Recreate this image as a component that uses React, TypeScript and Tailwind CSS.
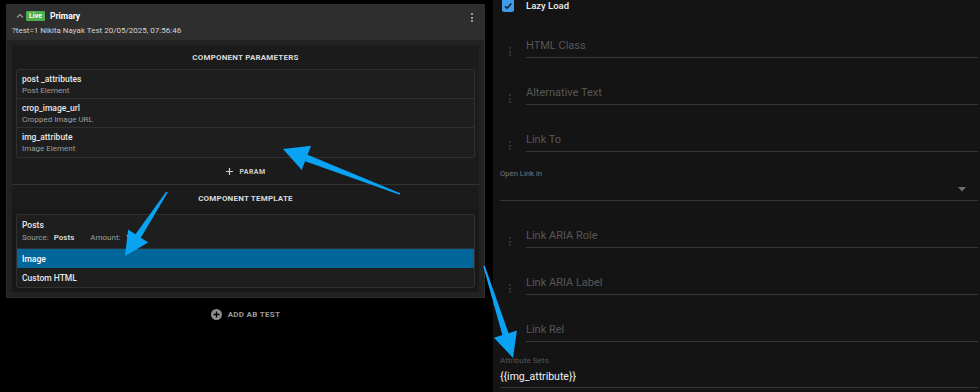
import React from "react";

type Pt = [number, number];

function arrowPoints(T: Pt, P: Pt, L: number, H: number, s1: number, s0: number): string {
  const dx = P[0] - T[0];
  const dy = P[1] - T[1];
  const len = Math.hypot(dx, dy);
  const d: Pt = [dx / len, dy / len];
  const n: Pt = [-d[1], d[0]];
  const B: Pt = [P[0] - d[0] * L, P[1] - d[1] * L];
  const pts: Pt[] = [
    [T[0] + n[0] * s0, T[1] + n[1] * s0],
    [B[0] + n[0] * s1, B[1] + n[1] * s1],
    [B[0] + n[0] * H, B[1] + n[1] * H],
    P,
    [B[0] - n[0] * H, B[1] - n[1] * H],
    [B[0] - n[0] * s1, B[1] - n[1] * s1],
    [T[0] - n[0] * s0, T[1] - n[1] * s0],
  ];
  return pts.map((p) => `${p[0].toFixed(1)},${p[1].toFixed(1)}`).join(" ");
}

function Dots({ className }: { className: string }) {
  return (
    <div className={`flex flex-col gap-[1.5px] ${className}`}>
      <span className="block w-[2px] h-[2px] rounded-full bg-current" />
      <span className="block w-[2px] h-[2px] rounded-full bg-current" />
      <span className="block w-[2px] h-[2px] rounded-full bg-current" />
    </div>
  );
}

function TextField({ label, handle = true, first = false }: { label: string; handle?: boolean; first?: boolean }) {
  return (
    <div className={`${first ? "h-[46px]" : "h-[47px]"} flex items-end`}>
      <div className="w-[26px] h-full flex items-end">
        {handle && <Dots className="ml-[9px] mb-[2px] text-[#3c3c3c]" />}
      </div>
      <div className="flex-1 border-b border-[#363636] pb-[3px]">
        <div className="text-[11px] leading-[16px] text-[#575757]">{label}</div>
      </div>
    </div>
  );
}

function ParamRow({ name, desc, last = false }: { name: string; desc: string; last?: boolean }) {
  return (
    <div className={`h-[29px] ${last ? "" : "border-b border-[#303030]"} px-[5px] pt-[4px]`}>
      <div className="text-[8.5px] leading-[11px] font-medium text-[#e8e8e8]">{name}</div>
      <div className="text-[8px] leading-[11px] text-[#9e9e9e]">{desc}</div>
    </div>
  );
}

export default function App() {
  const blue = "#0aa2f2";
  return (
    <div className="relative w-[980px] h-[392px] overflow-hidden bg-black flex font-['Roboto','Liberation_Sans',sans-serif]">
      {/* Left column */}
      <div className="w-[493px] shrink-0 pl-[6px] pt-[4px] pr-[8px] flex flex-col">
        <div className="w-[479px] h-[294px] border border-[#2e2e2e] bg-[#222222] flex flex-col">
          {/* header */}
          <div className="h-[35px] bg-[#2e2e2e] px-[4px] pt-[5px] relative">
            <div className="h-[12px] flex items-center">
              <svg width="10" height="10" viewBox="0 0 10 10" className="ml-[4px]">
                <path d="M2 6.5 L5 3.5 L8 6.5" fill="none" stroke="#9a9a9a" strokeWidth="1.2" />
              </svg>
              <span className="ml-[1px] h-[10px] px-[3px] bg-[#4caf50] text-white text-[7px] font-bold leading-[10px] rounded-[1px]">
                Live
              </span>
              <span className="ml-[5px] text-[8.5px] font-bold text-white leading-[12px]">Primary</span>
            </div>
            <div className="mt-[3px] ml-[1px] text-[8px] leading-[12px] text-[#d4d4d4]">
              ?test=1 Nikita Nayak Test 20/05/2025, 07:56:46
            </div>
            <Dots className="absolute right-[11px] top-[8px] text-[#bdbdbd]" />
          </div>
          {/* body */}
          <div className="px-[5px] pt-[5px] pb-[5px] flex-1">
            <div className="bg-[#1b1b1b] h-[247px] flex flex-col">
              <div className="h-[24px] pt-[2px] flex items-center justify-center text-[8px] font-bold text-[#dcdcdc] tracking-[0.2px]">
                COMPONENT PARAMETERS
              </div>
              <div className="mx-[4px] border border-[#303030] bg-[#1e1e1e] rounded-[2px]">
                <ParamRow name="post _attributes" desc="Post Element" />
                <ParamRow name="crop_image_url" desc="Cropped Image URL" />
                <ParamRow name="img_attribute" desc="Image Element" last />
              </div>
              <div className="h-[27px] pt-[2px] flex items-center justify-center gap-[7px] text-[#cfcfcf]">
                <svg width="7" height="7" viewBox="0 0 7 7">
                  <path d="M3.5 0 V7 M0 3.5 H7" stroke="#d0d0d0" strokeWidth="1.2" />
                </svg>
                <span className="text-[7px] font-bold tracking-[0.4px]">PARAM</span>
              </div>
              <div className="border-t border-[#333333]" />
              <div className="h-[24px] pt-[3px] flex items-center justify-center text-[8px] font-bold text-[#dcdcdc] tracking-[0.2px]">
                COMPONENT TEMPLATE
              </div>
              <div className="bg-[#181818] px-[4px] pt-[5px] pb-[4px] flex-1">
                <div className="border border-[#303030] bg-[#1e1e1e] rounded-[2px]">
                  <div className="h-[34px] px-[5px] pt-[4px] border-b border-[#303030]">
                    <div className="text-[8.5px] leading-[12px] font-medium text-[#e8e8e8]">Posts</div>
                    <div className="mt-[1px] flex text-[8px] leading-[12px]">
                      <span className="text-[#9e9e9e]">Source:</span>
                      <span className="ml-[5px] font-bold text-[#d0d0d0]">Posts</span>
                      <span className="ml-[16px] text-[#9e9e9e]">Amount:</span>
                      <span className="ml-[5px] text-[#d0d0d0]">1</span>
                    </div>
                  </div>
                  <div className="h-[19px] px-[5px] pt-[1px] bg-[#01679b] flex items-center text-[8.5px] font-medium text-white">
                    Image
                  </div>
                  <div className="h-[19px] px-[5px] pt-[2px] flex items-center text-[8.5px] font-medium text-[#e8e8e8]">
                    Custom HTML
                  </div>
                </div>
              </div>
            </div>
          </div>
        </div>
        <div className="h-[32px] w-[479px] pt-[1px] flex items-center justify-center gap-[6px]">
          <svg width="11" height="11" viewBox="0 0 12 12">
            <circle cx="6" cy="6" r="6" fill="#8e8e8e" />
            <path d="M6 2.8 V9.2 M2.8 6 H9.2" stroke="#000" strokeWidth="1.4" />
          </svg>
          <span className="text-[8px] font-bold text-[#9a9a9a] tracking-[0.3px]">ADD AB TEST</span>
        </div>
      </div>

      {/* Right column */}
      <div className="flex-1 bg-[#141414] pl-[7px] pr-[2px] flex flex-col">
        <div className="h-[12px] flex items-center">
          <div className="ml-[2px] -mt-[1px] w-[12px] h-[13px] rounded-[2px] bg-[#3d9be9] flex items-center justify-center">
            <svg width="10" height="10" viewBox="0 0 10 10">
              <path d="M1.8 5.2 L4 7.3 L8.4 2.6" fill="none" stroke="#10202e" strokeWidth="1.5" />
            </svg>
          </div>
          <span className="ml-[12px] text-[9.5px] font-medium text-[#f0f0f0]">Lazy Load</span>
        </div>
        <TextField label="HTML Class" first />
        <TextField label="Alternative Text" />
        <TextField label="Link To" />
        <div className="h-[49px] flex flex-col">
          <div className="pt-[17px] h-[29px] text-[7.7px] leading-[10px] text-[#7a7a7a]">Open Link in</div>
          <div className="h-[20px] border-b border-[#363636] flex items-center justify-end pr-[12px]">
            <svg width="8" height="5" viewBox="0 0 8 5" className="-mt-[2px]">
              <path d="M0 0 H8 L4 4.5 Z" fill="#6c6c6c" />
            </svg>
          </div>
        </div>
        <TextField label="Link ARIA Role" />
        <TextField label="Link ARIA Label" />
        <TextField label="Link Rel" handle={false} />
        <div className="h-[46px] pt-[14px]">
          <div className="h-[10px] text-[8px] leading-[10px] text-[#555555]">Attribute Sets</div>
          <div className="mt-[3px] border-b border-[#363636] pb-[2px]">
            <div className="text-[10.5px] leading-[16px] text-[#f2f2f2]">{"{{img_attribute}}"}</div>
          </div>
        </div>
      </div>

      {/* annotation arrows */}
      <svg className="absolute inset-0 pointer-events-none" width="980" height="392" viewBox="0 0 980 392">
        <polygon points={arrowPoints([400, 194], [283, 149], 25, 13, 3.5, 0.8)} fill={blue} />
        <polygon points={arrowPoints([167, 192], [125, 256], 24, 12, 3.2, 0.8)} fill={blue} />
        <polygon points={arrowPoints([484, 266], [513, 358], 25, 12, 3.2, 0.8)} fill={blue} />
      </svg>
    </div>
  );
}
